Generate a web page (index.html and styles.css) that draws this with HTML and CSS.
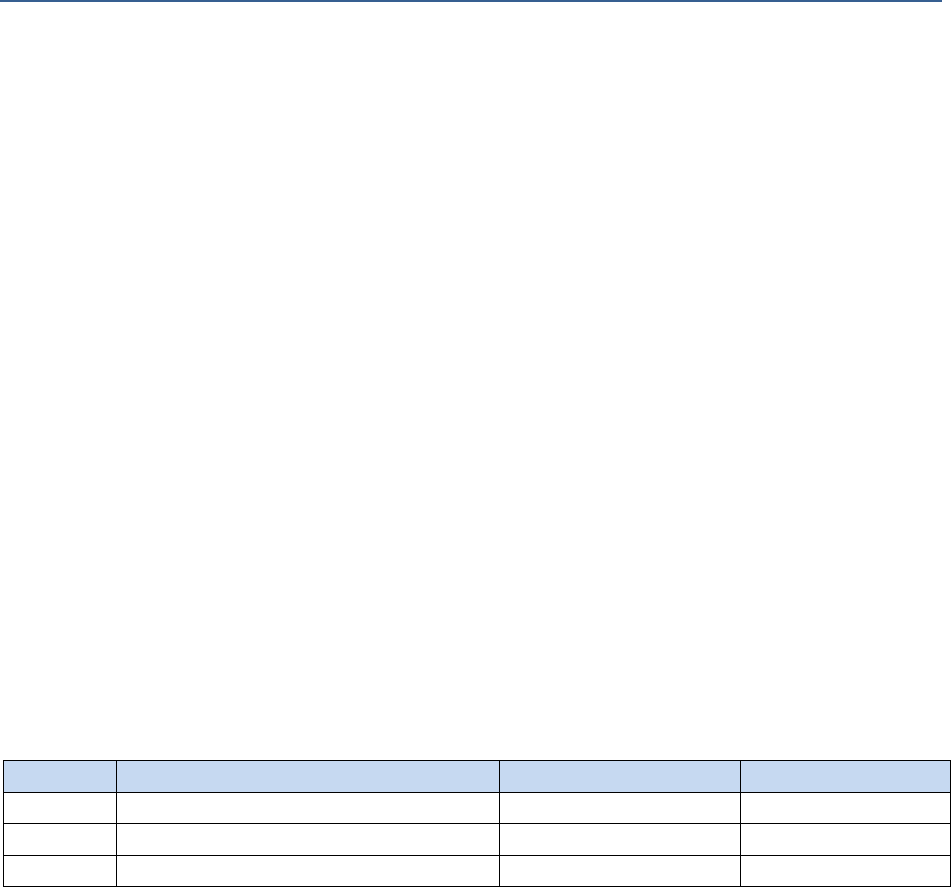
FILE: index.html
```html
<!DOCTYPE html>
<html lang="en">
<head>
  <meta charset="UTF-8">
  <meta name="viewport" content="width=device-width, initial-scale=1.0">
  <title>Document</title>
  <link rel="stylesheet" href="styles.css">
</head>
<body>
  <div class="page">
    <div class="page-header"></div>

    <div class="page-body">
      <table class="doc-table">
        <colgroup>
          <col class="col-a">
          <col class="col-b">
          <col class="col-c">
          <col class="col-d">
        </colgroup>
        <thead>
          <tr class="row-tall">
            <th></th>
            <th></th>
            <th></th>
            <th></th>
          </tr>
        </thead>
        <tbody>
          <tr class="row-short">
            <td></td>
            <td></td>
            <td></td>
            <td></td>
          </tr>
          <tr class="row-tall">
            <td></td>
            <td></td>
            <td></td>
            <td></td>
          </tr>
          <tr class="row-short">
            <td></td>
            <td></td>
            <td></td>
            <td></td>
          </tr>
        </tbody>
      </table>
    </div>
  </div>
</body>
</html>
```

FILE: styles.css
```css
body {
    margin: 0;
    font-family: 'Liberation Sans', Arial, sans-serif;
    font-size: 14px;
    color: #000;
    background-color: #fff;
}
.page {
    width: 951px;
    height: 887px;
    overflow: hidden;
}
.page-header {
    width: 942px;
    height: 2px;
    background-color: #365f91;
}
.page-body {
    padding: 758px 0 0 3px;
}
.doc-table {
    width: 948px;
    border-collapse: collapse;
    table-layout: fixed;
    border: 1px solid #000;
}
.col-a { width: 113px; }
.col-b { width: 383px; }
.col-c { width: 241px; }
.col-d { width: 210px; }
.doc-table th, .doc-table td {
    border: 1px solid #000;
    padding: 0;
}
.doc-table th {
    background-color: #c6d9f1;
}
.row-tall { height: 32px; }
.row-short { height: 31px; }
```
